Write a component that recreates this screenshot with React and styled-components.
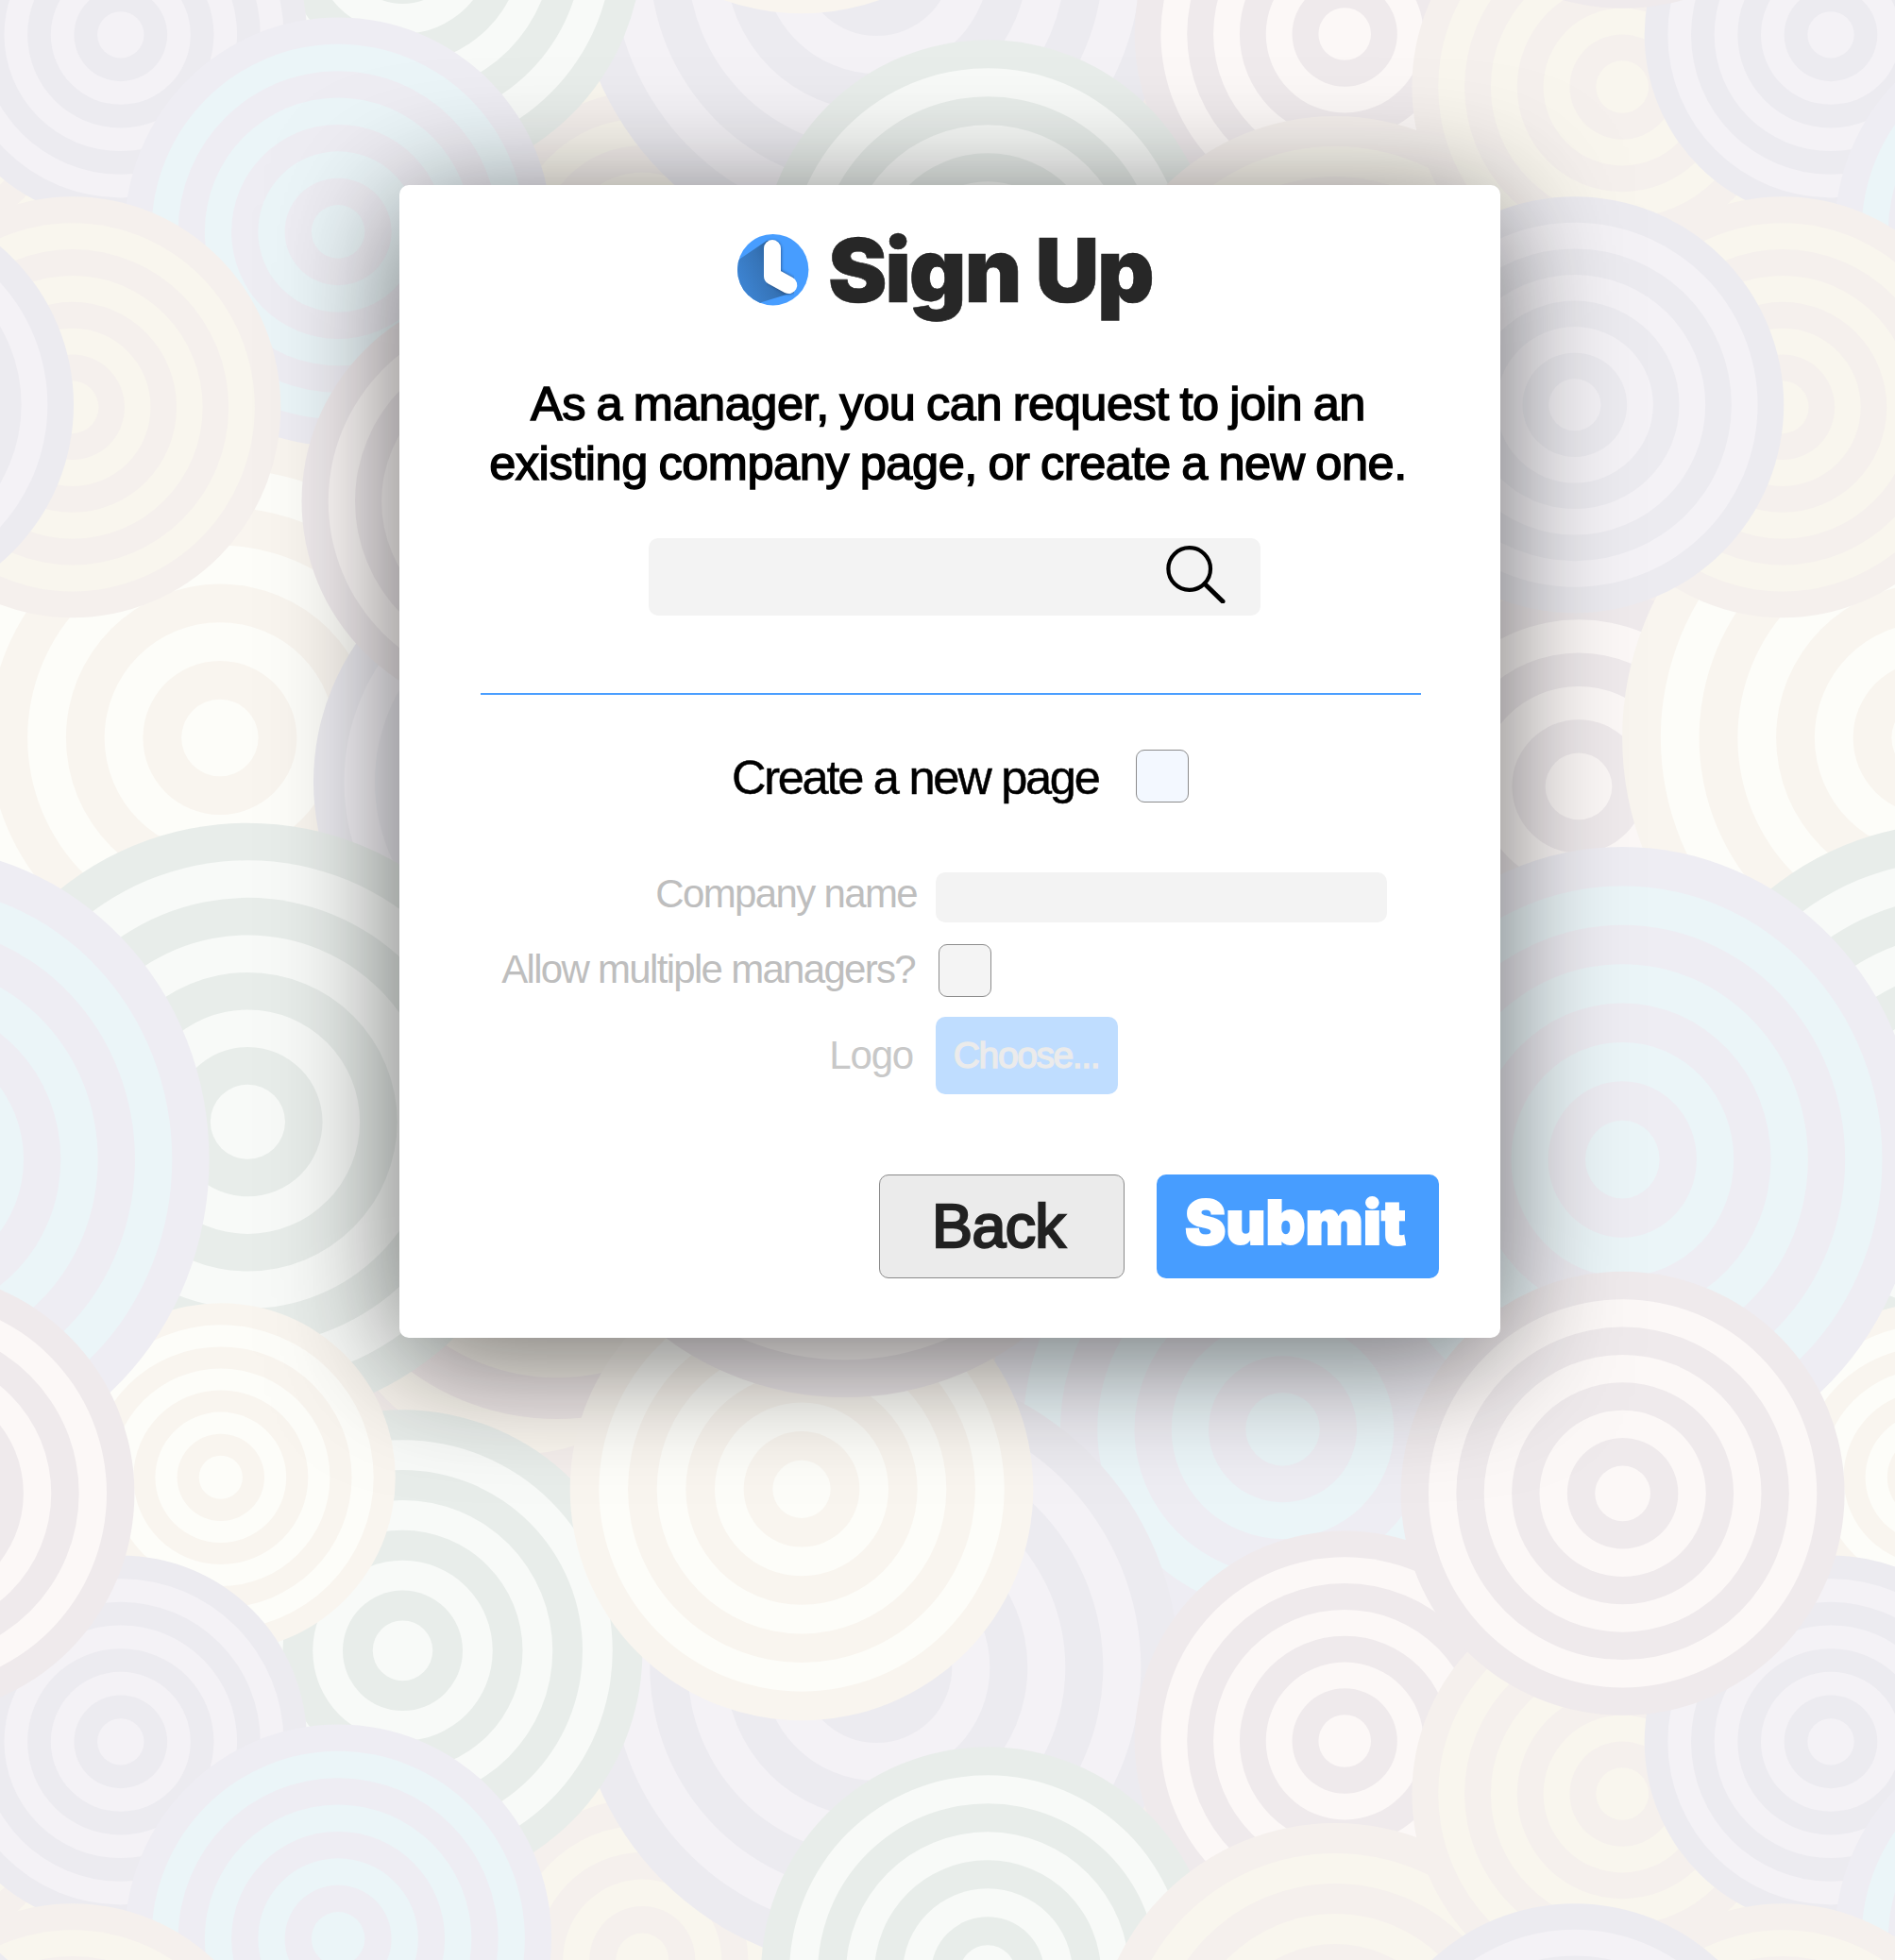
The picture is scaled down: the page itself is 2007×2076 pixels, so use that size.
import React from "react";
import styled, { createGlobalStyle } from "styled-components";

const GlobalStyle = createGlobalStyle`
  *, *::before, *::after { box-sizing: border-box; }
  body { margin: 0; background: #f4eeec; font-family: "Liberation Sans", Arial, sans-serif; }
`;

/* ---------- Background pattern ---------- */

const TILE = { w: 1811.2, h: 1808 };
const VIEW = { w: 2007, h: 2076 };

const PALETTES = {
  lilac: ["#ecebf0", "#f4f2f6"],
  blue: ["#eeedf3", "#ebf5f8"],
  yellow: ["#f5f0ed", "#f9f6ee"],
  cream: ["#f9f5ef", "#fdfdf9"],
  green: ["#e8edea", "#f8faf8"],
  red: ["#efeaec", "#fcf8f7"],
  mauve: ["#efe8e8", "#f6f2eb"],
  sand: ["#f9f5ee", "#f9f5ee"],
};

/* Listed from the lowest disc to the topmost one. */
const DISCS = [
  { x: 680.3, y: 2076, rx: 224, ry: 228, tone: "yellow" },
  { x: 1358.5, y: 1513.7, rx: 314, ry: 310, tone: "blue" },
  { x: 928.3, y: 1766, rx: 320, ry: 320, tone: "lilac" },
  { x: 1424.2, y: 1844, rx: 222.6, ry: 222.6, tone: "red" },
  { x: 1046, y: 2090.3, rx: 240, ry: 240, tone: "green" },
  { x: 1414, y: 2187, rx: 256, ry: 256, tone: "yellow" },
  { x: 1718.2, y: 1900, rx: 222.8, ry: 222.5, tone: "yellow" },
  { x: 1672, y: 832.9, rx: 212, ry: 212, bands: 6, tone: "red" },
  { x: 232.9, y: 781.5, rx: 326, ry: 326, tone: "cream" },
  { x: 592, y: 828, rx: 260, ry: 260, tone: "lilac" },
  { x: 550, y: 1340, rx: 200, ry: 200, tone: "sand" },
  { x: 590, y: 1240, rx: 263, ry: 263, bands: 6, tone: "mauve" },
  { x: 262.4, y: 1188.2, rx: 316.5, ry: 316.5, tone: "green" },
  { x: 426.5, y: 1748.3, rx: 254, ry: 255, tone: "green" },
  { x: 849, y: 1577.3, rx: 245.3, ry: 245, tone: "cream" },
  { x: 233.8, y: 1564.8, rx: 185, ry: 184.5, tone: "cream" },
  { x: 127.8, y: 1844.8, rx: 197.3, ry: 197.3, tone: "lilac" },
  { x: 358.1, y: 245.4, rx: 226, ry: 227, tone: "blue" },
  { x: 1718.3, y: 1228, rx: 314.5, ry: 331, tone: "blue" },
  { x: 1718.6, y: 1581.8, rx: 235, ry: 235, tone: "red" },
  { x: 76.8, y: 431.3, rx: 220.5, ry: 223, tone: "yellow" },
  { x: 1667.8, y: 428.8, rx: 221.4, ry: 220.5, tone: "lilac" },
  { x: 545.5, y: 531, rx: 226, ry: 226, tone: "red" },
  { x: 895, y: 1162, rx: 318, ry: 318, tone: "red" },
];

function Disc({ x, y, rx, ry, bands = 8, tone }) {
  const [dark, light] = PALETTES[tone];
  const rings = [];
  for (let i = bands; i > 0; i--) {
    rings.push(
      <ellipse
        key={i}
        cx={x}
        cy={y}
        rx={(rx * i) / bands}
        ry={(ry * i) / bands}
        fill={i % 2 === 0 ? dark : light}
      />
    );
  }
  return <g>{rings}</g>;
}

function visibleCopies(disc) {
  const copies = [];
  for (const i of [-1, 0, 1]) {
    for (const j of [-1, 0, 1]) {
      const x = disc.x + i * TILE.w;
      const y = disc.y + j * TILE.h;
      const inX = x + disc.rx > 0 && x - disc.rx < VIEW.w;
      const inY = y + disc.ry > 0 && y - disc.ry < VIEW.h;
      if (inX && inY) copies.push({ ...disc, x, y });
    }
  }
  return copies;
}

const Backdrop = styled.svg`
  grid-area: 1 / 1;
  display: block;
  width: 2007px;
  height: 2076px;
`;

function Pattern() {
  return (
    <Backdrop viewBox={`0 0 ${VIEW.w} ${VIEW.h}`} aria-hidden="true">
      {DISCS.flatMap(visibleCopies).map((disc, i) => (
        <Disc key={i} {...disc} />
      ))}
    </Backdrop>
  );
}

/* ---------- Layout ---------- */

const Page = styled.div`
  display: grid;
  width: 2007px;
  height: 2076px;
  overflow: hidden;
`;

const Card = styled.main`
  grid-area: 1 / 1;
  z-index: 1;
  display: flex;
  flex-direction: column;
  align-items: flex-start;
  width: 1166px;
  height: 1221px;
  margin: 196px 0 0 423px;
  padding-top: 52px;
  border-radius: 10px;
  background: #fff;
  box-shadow: 0 20px 130px rgba(0, 0, 0, 0.56);
`;

const Header = styled.header`
  display: flex;
  align-items: center;
  gap: 20px;
  height: 76px;
  padding-left: 358px;
`;

const Logo = styled.svg`
  width: 76px;
  height: 76px;
  flex: none;
`;

const Title = styled.h1`
  margin: 0;
  font-family: Inter, "Liberation Sans", sans-serif;
  font-size: 94px;
  font-weight: 900;
  line-height: 76px;
  letter-spacing: -2.3px;
  color: #272727;
  white-space: nowrap;
  -webkit-text-stroke: 0.6px #272727;
`;

const Intro = styled.p`
  width: 1162px;
  margin: 73px 0 0;
  font-size: 50.5px;
  line-height: 62.5px;
  letter-spacing: -0.45px;
  word-spacing: -2px;
  text-align: center;
  color: #000;
  -webkit-text-stroke: 1.5px #000;
`;

const SearchField = styled.label`
  display: flex;
  align-items: center;
  width: 648px;
  height: 82px;
  margin: 48px 0 0 264px;
  padding-right: 36px;
  border-radius: 10px;
  background: #f3f3f3;
`;

const SearchInput = styled.input`
  flex: 1;
  min-width: 0;
  height: 100%;
  border: 0;
  background: transparent;
  font: 40px "Liberation Sans", Arial, sans-serif;
`;

const SearchIcon = styled.svg`
  width: 64px;
  height: 64px;
  margin-top: -8px;
`;

const Divider = styled.hr`
  width: 996px;
  height: 2px;
  margin: 82px 0 0 86px;
  border: 0;
  background: #4a9eff;
`;

const CreateRow = styled.label`
  display: flex;
  align-items: center;
  height: 56px;
  margin: 58px 0 0 352px;
`;

const CreateText = styled.span`
  width: 428px;
  padding-top: 3px;
  font-size: 50.5px;
  line-height: 56px;
  letter-spacing: -2.25px;
  color: #000;
  -webkit-text-stroke: 0.5px #000;
`;

const Checkbox = styled.input.attrs({ type: "checkbox" })`
  appearance: none;
  width: 56px;
  height: 56px;
  margin: 0;
  border: 1px solid #8c8c8c;
  border-radius: 9px;
  background: ${(p) => p.$fill};
`;

const Form = styled.div`
  display: flex;
  flex-direction: column;
  margin-top: 74px;
`;

const Row = styled.div`
  display: flex;
  align-items: center;
  gap: ${(p) => p.$gap}px;
  height: ${(p) => p.$height}px;
  margin-bottom: ${(p) => p.$after}px;
`;

const RowLabel = styled.label`
  width: ${(p) => p.$width}px;
  padding-bottom: ${(p) => p.$lift}px;
  font-size: 42px;
  line-height: 48px;
  letter-spacing: ${(p) => p.$tracking}px;
  text-align: right;
  white-space: nowrap;
  color: ${(p) => p.$color || "#bebebe"};
`;

const NameInput = styled.input`
  width: 478px;
  height: 53px;
  border: 0;
  border-radius: 10px;
  background: #f3f3f3;
`;

const Button = styled.button`
  display: flex;
  align-items: center;
  justify-content: center;
  border: 0;
  border-radius: 10px;
  font-family: "Liberation Sans", Arial, sans-serif;
  white-space: nowrap;
`;

const ChooseButton = styled(Button)`
  width: 193px;
  height: 82px;
  padding: 0 9px 0 8px;
  background: #bfddff;
  color: #ebebeb;
  font-size: 39px;
  letter-spacing: -1.4px;
  -webkit-text-stroke: 1.4px #ebebeb;
`;

const Footer = styled.footer`
  display: flex;
  gap: 34px;
  margin: 85px 0 0 508px;
`;

const BackButton = styled(Button)`
  width: 260px;
  height: 110px;
  padding: 0 7px 0 0;
  border: 1px solid #8a8a8a;
  background: #ebebeb;
  color: #212121;
  font-size: 64.5px;
  letter-spacing: -0.6px;
  -webkit-text-stroke: 2.4px #212121;
`;

const SubmitButton = styled(Button)`
  width: 299px;
  height: 110px;
  padding: 0 5px 9px 0;
  background: #479dff;
  color: #fff;
  font-family: Inter, "Liberation Sans", sans-serif;
  font-size: 65px;
  font-weight: 900;
  -webkit-text-stroke: 2px #fff;
`;

function ClockLogo() {
  return (
    <Logo viewBox="0 0 76 76" aria-hidden="true">
      <defs>
        <clipPath id="face">
          <circle cx="37.7" cy="37.7" r="37.7" />
        </clipPath>
        <linearGradient id="cast" x1="0.75" y1="0.3" x2="0.1" y2="0.65">
          <stop offset="0" stopColor="#2a619c" />
          <stop offset="0.45" stopColor="#3674b8" />
          <stop offset="1" stopColor="#3c82cf" />
        </linearGradient>
        <filter id="soft" x="-30%" y="-30%" width="160%" height="160%">
          <feGaussianBlur stdDeviation="1.8" />
        </filter>
      </defs>
      <g clipPath="url(#face)">
        <rect width="76" height="76" fill="#479dff" />
        <path d="M31 7 L0 28 V76 H20 L26 72 L60 61.5 L46 40 L36 8 Z" fill="url(#cast)" />
        <path
          d="M37 16 V44 L54 54"
          fill="none"
          stroke="#1d3f68"
          strokeOpacity="0.75"
          strokeWidth="19"
          strokeLinecap="round"
          strokeLinejoin="round"
          filter="url(#soft)"
        />
        <path
          d="M37 15 V44.5 L54.3 54"
          fill="none"
          stroke="#fff"
          strokeWidth="18"
          strokeLinecap="round"
          strokeLinejoin="round"
        />
      </g>
    </Logo>
  );
}

export default function App() {
  return (
    <>
      <GlobalStyle />
      <Page>
        <Pattern />
        <Card>
          <Header>
            <ClockLogo />
            <Title>Sign Up</Title>
          </Header>

          <Intro>
            As a manager, you can request to join an
            <br />
            existing company page, or create a new one.
          </Intro>

          <SearchField>
            <SearchInput aria-label="Search companies" />
            <SearchIcon viewBox="0 0 64 64" aria-hidden="true">
              <circle cx="24.7" cy="27.5" r="22.3" fill="none" stroke="#000" strokeWidth="4.2" />
              <path d="M41 43.5 L60 62" stroke="#000" strokeWidth="5" strokeLinecap="round" />
            </SearchIcon>
          </SearchField>

          <Divider />

          <CreateRow>
            <CreateText>Create a new page</CreateText>
            <Checkbox $fill="#f3f8ff" />
          </CreateRow>

          <Form>
            <Row $height={53} $gap={20} $after={23}>
              <RowLabel $width={548} $lift={7} $tracking={-1.65}>Company name</RowLabel>
              <NameInput aria-label="Company name" />
            </Row>
            <Row $height={56} $gap={25} $after={21}>
              <RowLabel $width={546} $lift={3} $tracking={-1.7}>Allow multiple managers?</RowLabel>
              <Checkbox $fill="#f4f4f4" />
            </Row>
            <Row $height={82} $gap={24} $after={0}>
              <RowLabel $width={544} $lift={0} $tracking={-1.2} $color="#c8c8c8">Logo</RowLabel>
              <ChooseButton>Choose...</ChooseButton>
            </Row>
          </Form>

          <Footer>
            <BackButton>Back</BackButton>
            <SubmitButton>Submit</SubmitButton>
          </Footer>
        </Card>
      </Page>
    </>
  );
}
